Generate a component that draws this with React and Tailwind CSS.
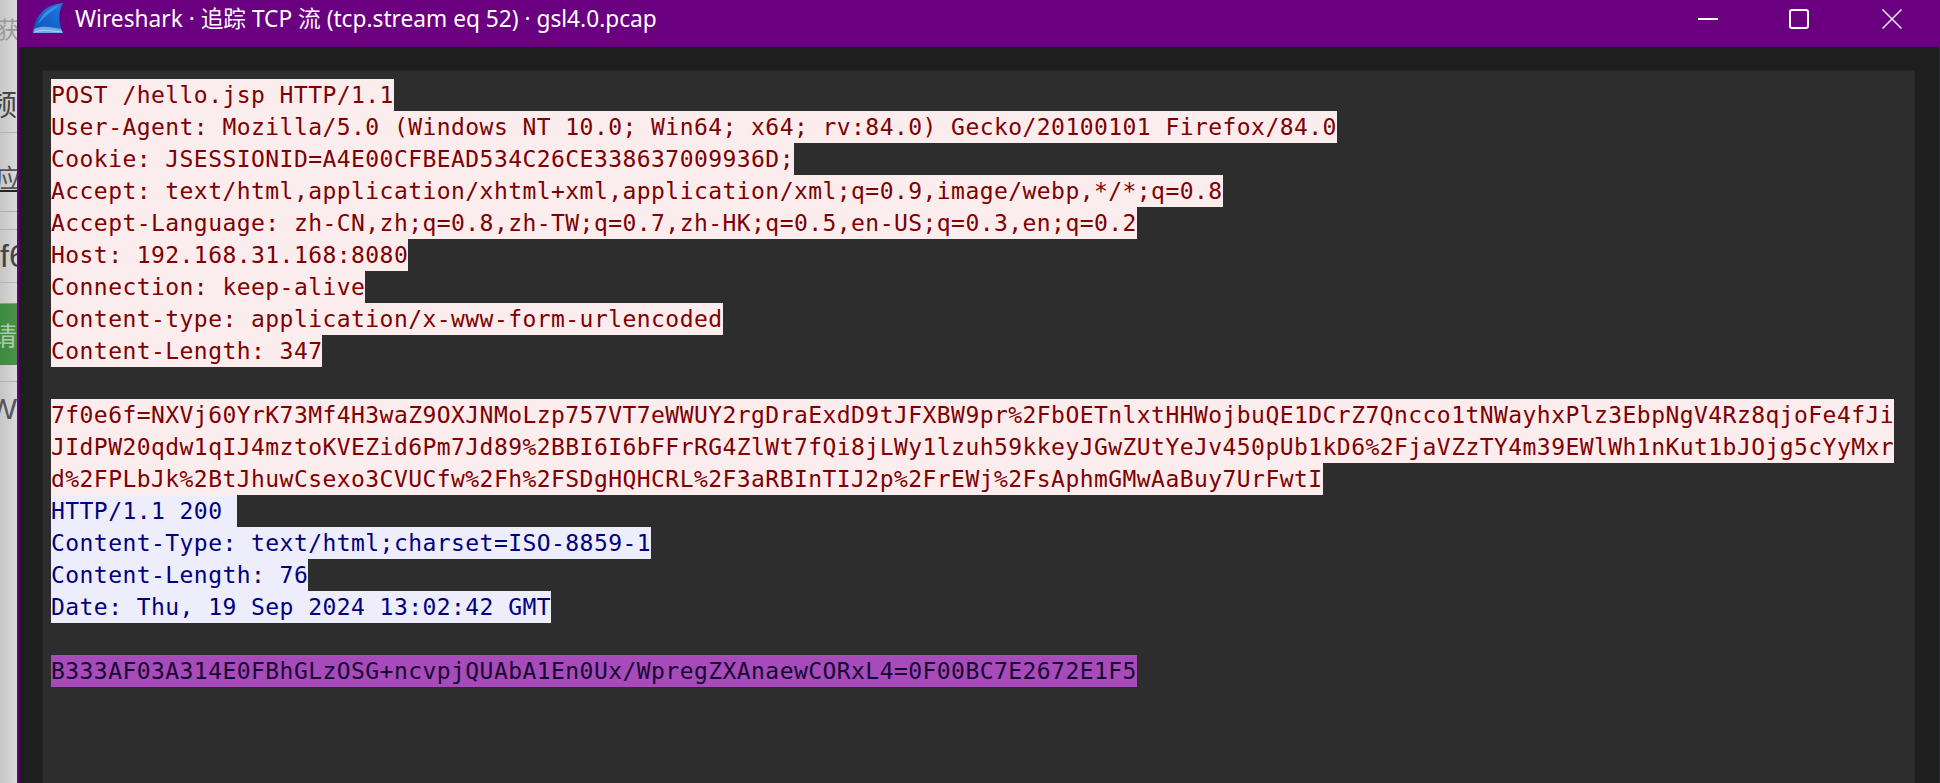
import React from 'react';

const mono = "font-['DejaVu_Sans_Mono',monospace] text-[23px] tracking-[0.44px] leading-8";

const request = [
  'POST /hello.jsp HTTP/1.1',
  'User-Agent: Mozilla/5.0 (Windows NT 10.0; Win64; x64; rv:84.0) Gecko/20100101 Firefox/84.0',
  'Cookie: JSESSIONID=A4E00CFBEAD534C26CE338637009936D;',
  'Accept: text/html,application/xhtml+xml,application/xml;q=0.9,image/webp,*/*;q=0.8',
  'Accept-Language: zh-CN,zh;q=0.8,zh-TW;q=0.7,zh-HK;q=0.5,en-US;q=0.3,en;q=0.2',
  'Host: 192.168.31.168:8080',
  'Connection: keep-alive',
  'Content-type: application/x-www-form-urlencoded',
  'Content-Length: 347',
  '',
  '7f0e6f=NXVj60YrK73Mf4H3waZ9OXJNMoLzp757VT7eWWUY2rgDraExdD9tJFXBW9pr%2FbOETnlxtHHWojbuQE1DCrZ7Qncco1tNWayhxPlz3EbpNgV4Rz8qjoFe4fJi',
  'JIdPW20qdw1qIJ4mztoKVEZid6Pm7Jd89%2BBI6I6bFFrRG4ZlWt7fQi8jLWy1lzuh59kkeyJGwZUtYeJv450pUb1kD6%2FjaVZzTY4m39EWlWh1nKut1bJOjg5cYyMxr',
  'd%2FPLbJk%2BtJhuwCsexo3CVUCfw%2Fh%2FSDgHQHCRL%2F3aRBInTIJ2p%2FrEWj%2FsAphmGMwAaBuy7UrFwtI',
];

const response = [
  'HTTP/1.1 200 ',
  'Content-Type: text/html;charset=ISO-8859-1',
  'Content-Length: 76',
  'Date: Thu, 19 Sep 2024 13:02:42 GMT',
  '',
];

const Line = ({ text, className }) =>
  text ? (
    <div className={`w-fit h-8 whitespace-pre ${className}`}>{text}</div>
  ) : (
    <div className="h-8" />
  );

const SharkIcon = () => (
  <svg width="30" height="30" viewBox="0 0 30 30">
    <defs>
      <linearGradient id="fin" x1="1" y1="0" x2="0" y2="1">
        <stop offset="0" stopColor="#1f7fe8" />
        <stop offset="0.6" stopColor="#1262c8" />
        <stop offset="1" stopColor="#0f55ad" />
      </linearGradient>
    </defs>
    <path d="M0 30 C2 14 10 2 30 0 C25 9 25 20 30 30 Z" fill="url(#fin)" />
    <path d="M5 21 C9 10 16 5 27 2 C19 8 12 13 5 21 Z" fill="#4f9bef" opacity="0.7" />
    <path d="M1 26 C9 22 18 24 28 26 L30 30 L0 30 Z" fill="#6ea8e6" />
    <path d="M2 29 C10 26 18 28 29 29" stroke="#c4dcf5" strokeWidth="0.8" fill="none" />
  </svg>
);

// bit of the page behind the window, only its right edge shows
const BehindWindow = () => (
  <div className="w-[17px] shrink-0 h-full overflow-hidden bg-gradient-to-r from-[#c6c6c6] to-[#dadada] flex flex-col font-['Noto_Sans_CJK_SC',sans-serif]">
    <div className="h-[16px]" />
    <div className="h-[24px] flex justify-center items-center text-[23px] text-[#9a9a9a] whitespace-nowrap">获</div>
    <div className="h-[46px]" />
    <div className="h-[33px] flex justify-end items-center text-[30px] text-[#444] whitespace-nowrap">频</div>
    <div className="h-[14px] border-b border-[#b4b4b4]" />
    <div className="h-[59px] border-b-2 border-[#222] flex justify-center items-end text-[26px] leading-[26px] text-[#555] whitespace-nowrap">应</div>
    <div className="h-[20px] border-b border-[#b0b0b0]" />
    <div className="h-[18px] border-b border-[#b0b0b0]" />
    <div className="h-[53px] border-b border-[#b8b8b8] flex justify-start items-center font-['Liberation_Sans',sans-serif] text-[32px] text-[#444] whitespace-nowrap">f6</div>
    <div className="h-[20px]" />
    <div className="h-[62px] bg-gradient-to-r from-[#3f8a42] to-[#4a9048] border-t border-[#6fae6f] flex justify-end items-center text-[26px] text-[#a9cba9] whitespace-nowrap">请</div>
    <div className="h-[17px] border-b border-[#b0b0b0]" />
    <div className="h-[15px]" />
    <div className="h-[23px] flex justify-end items-center font-['Liberation_Sans',sans-serif] text-[30px] text-[#555] whitespace-nowrap">W</div>
  </div>
);

export default function App() {
  return (
    <div className="w-screen h-screen overflow-hidden flex">
      <BehindWindow />
      <div className="flex-1 min-w-0 h-full flex flex-col bg-[#6a0080] pl-[2px] pr-px">
        {/* Title bar */}
        <div className="h-[47px] shrink-0 flex items-center -mr-px">
          <div className="ml-[14px] -mt-[11px] shrink-0 leading-none">
            <SharkIcon />
          </div>
          <span className="ml-[12px] -mt-[9px] text-white text-[22.7px] whitespace-nowrap font-['Noto_Sans','Noto_Sans_CJK_SC',sans-serif]">
            Wireshark · 追踪 TCP 流 (tcp.stream eq 52) · gsl4.0.pcap
          </span>
          <div className="ml-auto flex items-center -mt-[9px] pr-[38px] text-white">
            <svg width="20" height="20" viewBox="0 0 20 20" className="mr-[71px]">
              <path d="M0 10 H20" stroke="#fff" strokeWidth="2" />
            </svg>
            <svg width="20" height="20" viewBox="0 0 20 20" className="mr-[73px]">
              <rect x="1" y="1" width="18" height="18" rx="2" fill="none" stroke="#fff" strokeWidth="2" />
            </svg>
            <svg width="20" height="20" viewBox="0 0 20 20">
              <path d="M0.5 0.5 L19.5 19.5 M19.5 0.5 L0.5 19.5" stroke="#eee" strokeWidth="1.5" />
            </svg>
          </div>
        </div>

        {/* Dialog body */}
        <div className="flex-1 min-h-0 bg-[#1e1e1e] pt-[23px] pl-[23px] pr-[24px] flex flex-col">
          <div className={`flex-1 min-h-0 bg-[#2d2d2d] border-l border-t border-r border-[#252525] pt-2 pl-2 ${mono}`}>
            {request.map((t, i) => (
              <Line key={i} text={t} className="bg-[#fbeded] text-[#7f0000]" />
            ))}
            {response.map((t, i) => (
              <Line key={i} text={t} className="bg-[#ededfb] text-[#00007f]" />
            ))}
            <Line
              text="B333AF03A314E0FBhGLzOSG+ncvpjQUAbA1En0Ux/WpregZXAnaewCORxL4=0F00BC7E2672E1F5"
              className="bg-[#a74aba] text-[#150830]"
            />
          </div>
        </div>
      </div>
    </div>
  );
}
